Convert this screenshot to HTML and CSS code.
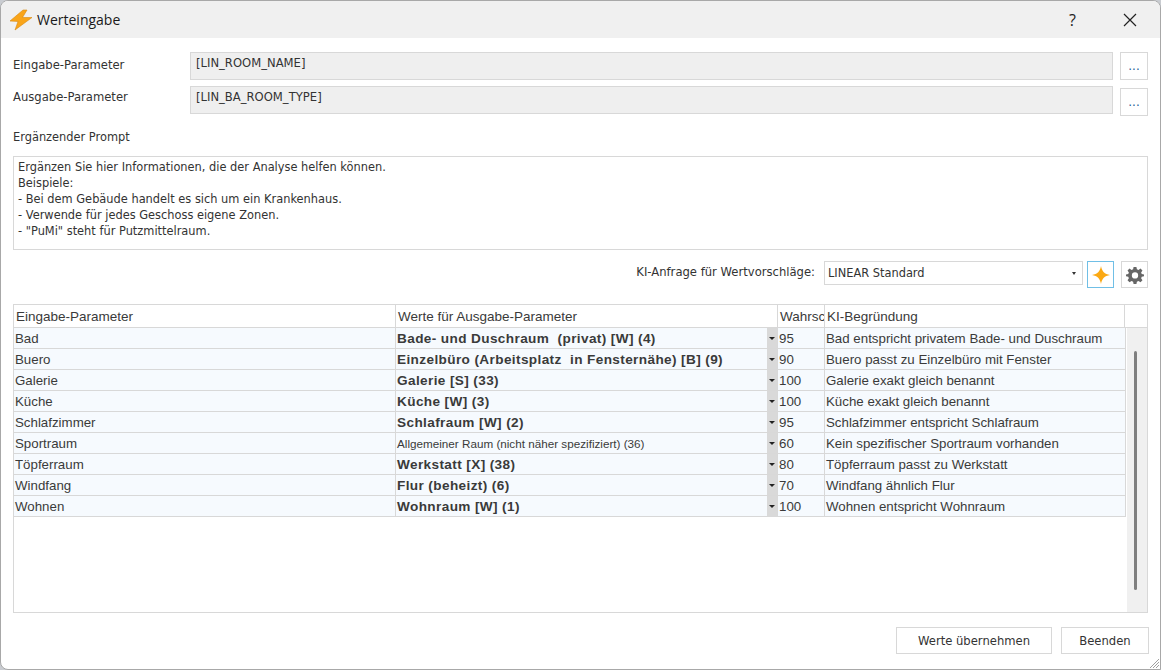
FILE: index.html
```html
<!DOCTYPE html>
<html lang="de">
<head>
  <meta charset="UTF-8">
  <title>Werteingabe</title>
  <link rel="stylesheet" href="styles.css">
</head>
<body>
  <div class="window">
    <div class="titlebar">
      <svg class="app-icon" width="24" height="22" viewBox="0 0 24 22">
        <path d="M14 1 L1 12 L9 12.5 L6 21 L23 8.5 L13.5 8.5 L18 1 Z" fill="#f9a51a" stroke="#d98a10" stroke-width="0.6"/>
      </svg>
      <span class="title">Werteingabe</span>
      <span class="help">?</span>
      <svg class="close" width="14" height="14" viewBox="0 0 14 14">
        <path d="M1 1 L13 13 M13 1 L1 13" stroke="#222" stroke-width="1.2" fill="none"/>
      </svg>
    </div>

    <div class="content">
      <div class="param-row">
        <label class="param-label">Eingabe-Parameter</label>
        <div class="param-value">[LIN_ROOM_NAME]</div>
        <button class="dots">...</button>
      </div>
      <div class="param-row second">
        <label class="param-label">Ausgabe-Parameter</label>
        <div class="param-value">[LIN_BA_ROOM_TYPE]</div>
        <button class="dots">...</button>
      </div>

      <div class="prompt-label">Ergänzender Prompt</div>
      <div class="prompt">Ergänzen Sie hier Informationen, die der Analyse helfen können.
Beispiele:
- Bei dem Gebäude handelt es sich um ein Krankenhaus.
- Verwende für jedes Geschoss eigene Zonen.
- "PuMi" steht für Putzmittelraum.</div>

      <div class="ki-row">
        <span class="ki-label">KI-Anfrage für Wertvorschläge:</span>
        <div class="combo"><span>LINEAR Standard</span><i class="arrow"></i></div>
        <button class="icon-btn active">
          <svg width="20" height="20" viewBox="0 0 20 20"><path d="M10 1 C11 6.5 13.5 9 19 10 C13.5 11 11 13.5 10 19 C9 13.5 6.5 11 1 10 C6.5 9 9 6.5 10 1 Z" fill="#fba914"/></svg>
        </button>
        <button class="icon-btn">
          <svg width="20" height="20" viewBox="0 0 20 20">
            <path d="M8.4 1 H11.6 L12.1 3.6 L13.9 4.4 L16.1 2.9 L18.3 5.1 L16.8 7.3 L17.5 9 L20 9.5 V11.5 L17.5 12 L16.8 13.7 L18.3 15.9 L16.1 18.1 L13.9 16.6 L12.1 17.4 L11.6 20 H8.4 L7.9 17.4 L6.1 16.6 L3.9 18.1 L1.7 15.9 L3.2 13.7 L2.5 12 L0 11.5 V9.5 L2.5 9 L3.2 7.3 L1.7 5.1 L3.9 2.9 L6.1 4.4 L7.9 3.6 Z M10 7 A3.5 3.5 0 1 0 10 14 A3.5 3.5 0 1 0 10 7 Z" fill="#666" fill-rule="evenodd" transform="translate(1 1) scale(0.9)"/>
          </svg>
        </button>
      </div>

      <div class="grid">
        <div class="grid-head">
          <div class="hcell">Eingabe-Parameter</div>
          <div class="hcell">Werte für Ausgabe-Parameter</div>
          <div class="hcell">Wahrsc</div>
          <div class="hcell">KI-Begründung</div>
          <div class="hcell last"></div>
        </div>
        <div class="grid-body">
          <div class="rows">
            <div class="row"><div class="cell">Bad</div><div class="cell val"><b>Bade- und Duschraum  (privat) [W] (4)</b><i class="drop"></i></div><div class="cell">95</div><div class="cell">Bad entspricht privatem Bade- und Duschraum</div></div>
            <div class="row"><div class="cell">Buero</div><div class="cell val"><b>Einzelbüro (Arbeitsplatz  in Fensternähe) [B] (9)</b><i class="drop"></i></div><div class="cell">90</div><div class="cell">Buero passt zu Einzelbüro mit Fenster</div></div>
            <div class="row"><div class="cell">Galerie</div><div class="cell val"><b>Galerie [S] (33)</b><i class="drop"></i></div><div class="cell">100</div><div class="cell">Galerie exakt gleich benannt</div></div>
            <div class="row"><div class="cell">Küche</div><div class="cell val"><b>Küche [W] (3)</b><i class="drop"></i></div><div class="cell">100</div><div class="cell">Küche exakt gleich benannt</div></div>
            <div class="row"><div class="cell">Schlafzimmer</div><div class="cell val"><b>Schlafraum [W] (2)</b><i class="drop"></i></div><div class="cell">95</div><div class="cell">Schlafzimmer entspricht Schlafraum</div></div>
            <div class="row"><div class="cell">Sportraum</div><div class="cell val"><span class="plain">Allgemeiner Raum (nicht näher spezifiziert) (36)</span><i class="drop"></i></div><div class="cell">60</div><div class="cell">Kein spezifischer Sportraum vorhanden</div></div>
            <div class="row"><div class="cell">Töpferraum</div><div class="cell val"><b>Werkstatt [X] (38)</b><i class="drop"></i></div><div class="cell">80</div><div class="cell">Töpferraum passt zu Werkstatt</div></div>
            <div class="row"><div class="cell">Windfang</div><div class="cell val"><b>Flur (beheizt) (6)</b><i class="drop"></i></div><div class="cell">70</div><div class="cell">Windfang ähnlich Flur</div></div>
            <div class="row"><div class="cell">Wohnen</div><div class="cell val"><b>Wohnraum [W] (1)</b><i class="drop"></i></div><div class="cell">100</div><div class="cell">Wohnen entspricht Wohnraum</div></div>
          </div>
          <div class="scrollbar"><div class="thumb"></div></div>
        </div>
      </div>

      <div class="actions">
        <button class="btn wide">Werte übernehmen</button>
        <button class="btn">Beenden</button>
      </div>
    </div>

    <svg class="grip" width="12" height="12" viewBox="0 0 12 12">
      <path d="M11 2 L2 11 M11 5 L5 11 M11 8 L8 11" stroke="#a0a0a0" stroke-width="1" fill="none"/>
    </svg>
  </div>
</body>
</html>
```

FILE: styles.css
```css
html, body {
  margin: 0;
  height: 100%;
  background: #c9ccd1;
  overflow: hidden;
}

.window {
  position: relative;
  box-sizing: border-box;
  width: 1161px;
  height: 670px;
  background: #fff;
  border: 1px solid #a8a8a8;
  border-radius: 8px 8px 0 8px;
  overflow: hidden;
  font-family: "DejaVu Sans", Tahoma, sans-serif;
  font-size: 11.6px;
  color: #333;
}

.titlebar {
  display: flex;
  align-items: center;
  height: 37px;
  background: #f0f0f0;
  padding-left: 8px;
}

.app-icon {
  margin-right: 4px;
}

.title {
  flex: 1;
  font-family: "Open Sans", sans-serif;
  font-size: 14px;
  color: #1a1a1a;
}

.help {
  font-family: "Open Sans", sans-serif;
  font-size: 16px;
  color: #222;
  margin-right: 47px;
}

.close {
  margin-right: 23px;
}

.content {
  padding: 14px 12px 0 12px;
}

.param-row {
  display: flex;
  height: 28px;
  margin-bottom: 6px;
}

.param-row.second {
  margin-bottom: 0;
}

.param-label {
  width: 177px;
  padding-top: 6px;
  line-height: 14px;
}

.param-row.second .param-label {
  padding-top: 4px;
}

.param-value {
  box-sizing: border-box;
  width: 923px;
  height: 28px;
  background: #efefef;
  border: 1px solid #d8d8d8;
  padding: 3px 5px;
  line-height: 14px;
}

.dots {
  box-sizing: border-box;
  width: 28px;
  height: 28px;
  margin-left: 7px;
  background: #fff;
  border: 1px solid #d8d8d8;
  color: #1f5f98;
  font-family: "DejaVu Sans", sans-serif;
  font-size: 12px;
  padding: 0;
}

.param-row.second .dots {
  margin-top: 2px;
}

.prompt-label {
  margin-top: 16px;
  height: 14px;
  line-height: 14px;
  font-size: 11.4px;
}

.prompt {
  box-sizing: border-box;
  width: 1135px;
  height: 94px;
  margin-top: 12px;
  border: 1px solid #d8d8d8;
  padding: 2px 4px;
  line-height: 16px;
  font-size: 11.4px;
  white-space: pre-wrap;
}

.ki-row {
  display: flex;
  align-items: flex-start;
  justify-content: flex-end;
  height: 27px;
  margin-top: 11px;
}

.ki-label {
  line-height: 23px;
  margin-right: 9px;
}

.combo {
  box-sizing: border-box;
  display: flex;
  align-items: center;
  justify-content: space-between;
  width: 259px;
  height: 24px;
  border: 1px solid #d8d8d8;
  padding: 0 6px 0 3px;
  margin-right: 4px;
  font-size: 11.4px;
}

.arrow {
  border-left: 2.5px solid transparent;
  border-right: 2.5px solid transparent;
  border-top: 3px solid #333;
}

.icon-btn {
  box-sizing: border-box;
  display: flex;
  align-items: center;
  justify-content: center;
  width: 27px;
  height: 27px;
  padding: 0;
  background: #fff;
  border: 1px solid #d8d8d8;
  margin-left: 7px;
}

.icon-btn.active {
  border-color: #70bfe6;
  margin-left: 0;
}

.grid {
  box-sizing: border-box;
  width: 1135px;
  height: 309px;
  margin-top: 16px;
  border: 1px solid #d8d8d8;
  display: flex;
  flex-direction: column;
  font-family: "Liberation Sans", Arial, sans-serif;
  font-size: 13.3px;
  color: #3a3a3a;
}

.grid-head {
  display: grid;
  grid-template-columns: 382px 382px 47px 300px 1fr;
  height: 22px;
  flex-shrink: 0;
  border-bottom: 1px solid #d8d8d8;
  font-size: 13.5px;
}

.hcell {
  box-sizing: border-box;
  border-right: 1px solid #d8d8d8;
  padding-left: 2px;
  line-height: 23px;
  overflow: hidden;
  white-space: nowrap;
}

.hcell.last {
  border-right: 0;
}

.grid-body {
  flex: 1;
  display: flex;
  min-height: 0;
}

.rows {
  width: 1112px;
}

.row {
  display: grid;
  grid-template-columns: 382px 382px 47px 301px;
  height: 20px;
  background: #f6fafe;
  border-bottom: 1px solid #d8d8d8;
  border-right: 1px solid #d8d8d8;
}

.cell {
  box-sizing: border-box;
  border-right: 1px solid #d8d8d8;
  padding-left: 1px;
  line-height: 21px;
  overflow: hidden;
  white-space: pre;
}

.cell:last-child {
  border-right: 0;
}

.cell.val {
  position: relative;
  padding-left: 1px;
}

.cell.val b {
  font-size: 13.6px;
  letter-spacing: 0.38px;
  color: #3a3a3a;
}

.plain {
  font-size: 11.7px;
}

/* dropdown marker sits on top of the value cell */
.drop {
  position: absolute;
  top: 0;
  right: 0;
  bottom: 0;
  width: 10px;
  background: #d9d9d9;
}

.drop::after {
  content: "";
  position: absolute;
  top: 9px;
  left: 2px;
  border-left: 3px solid transparent;
  border-right: 3px solid transparent;
  border-top: 3px solid #222;
}

.scrollbar {
  flex: 1;
  margin-left: 1px;
  background: #f0f0f0;
  display: flex;
  justify-content: center;
}

.thumb {
  width: 3px;
  height: 239px;
  margin-top: 23px;
  margin-right: 3px;
  background: #7f7f7f;
  border-radius: 2px;
}

.actions {
  display: flex;
  justify-content: flex-end;
  gap: 9px;
  margin-top: 14px;
  margin-right: -1px;
}

.btn {
  box-sizing: border-box;
  width: 88px;
  height: 27px;
  background: #fff;
  border: 1px solid #d8d8d8;
  color: #333;
  font-family: "DejaVu Sans", Tahoma, sans-serif;
  font-size: 11.6px;
  padding: 0;
}

.btn.wide {
  width: 156px;
}

/* resize grip in the window corner */
.grip {
  position: absolute;
  right: 0;
  bottom: 0;
}
```
